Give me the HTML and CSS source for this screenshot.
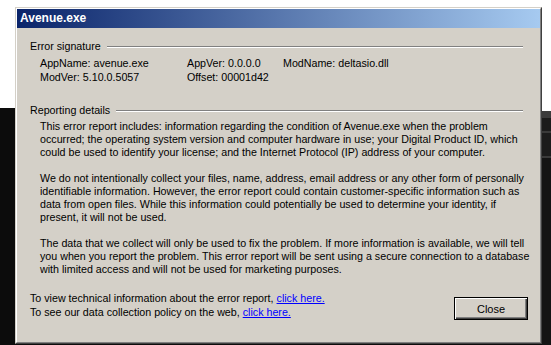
FILE: index.html
```html
<!DOCTYPE html>
<html lang="en">
<head>
    <meta charset="UTF-8">
    <title>Avenue.exe</title>
    <link rel="stylesheet" href="styles.css">
</head>
<body>
    <div class="dialog">
        <div class="frame">
            <div class="titlebar">Avenue.exe</div>
            <div class="content">
                <div class="group-head"><span>Error signature</span><div class="rule"></div></div>
                <div class="signature">
                    <span>AppName: avenue.exe</span>
                    <span>AppVer: 0.0.0.0</span>
                    <span>ModName: deltasio.dll</span>
                    <span>ModVer: 5.10.0.5057</span>
                    <span>Offset: 00001d42</span>
                    <span></span>
                </div>

                <div class="group-head reporting"><span>Reporting details</span><div class="rule"></div></div>
                <div class="details">
                    <p>This error report includes: information regarding the condition of Avenue.exe when the problem<br>
                    occurred; the operating system version and computer hardware in use; your Digital Product ID, which<br>
                    could be used to identify your license; and the Internet Protocol (IP) address of your computer.</p>
                    <p>We do not intentionally collect your files, name, address, email address or any other form of personally<br>
                    identifiable information. However, the error report could contain customer-specific information such as<br>
                    data from open files. While this information could potentially be used to determine your identity, if<br>
                    present, it will not be used.</p>
                    <p>The data that we collect will only be used to fix the problem. If more information is available, we will tell<br>
                    you when you report the problem. This error report will be sent using a secure connection to a database<br>
                    with limited access and will not be used for marketing purposes.</p>
                </div>

                <div class="footer">
                    <div class="links">
                        <div>To view technical information about the error report, <a href="#">click here.</a></div>
                        <div>To see our data collection policy on the web, <a href="#">click here.</a></div>
                    </div>
                    <button class="btn">Close</button>
                </div>
            </div>
        </div>
    </div>
</body>
</html>
```

FILE: styles.css
```css
html, body {
    margin: 0;
    padding: 0;
}
body {
    width: 551px;
    height: 345px;
    overflow: hidden;
    background-color: #0c0c0c;
    background-image:
        linear-gradient(to bottom, #ffffff 0, #ffffff 111px, #3c3c3c 111px, #3c3c3c 118px, #1c1c1c 118px, #1c1c1c 131px, #3a3a3a 131px, #3a3a3a 133px, #1c1c1c 133px, #1c1c1c 156px, #3a3a3a 156px, #3a3a3a 158px, #141414 158px),
        linear-gradient(to bottom, #ffffff 0, #ffffff 108px, #0c0c0c 108px);
    background-size: 9px 100%, 100% 100%;
    background-position: right top, left top;
    background-repeat: no-repeat;
    font-family: "Liberation Sans", Arial, sans-serif;
    font-size: 10.7px;
    color: #000;
}
.dialog {
    box-sizing: border-box;
    margin: 7px 0 0 15px;
    width: 527px;
    height: 337px;
    border: 1px solid;
    border-color: #d4d0c8 #404040 #404040 #d4d0c8;
    background: #d4d0c8;
}
.frame {
    box-sizing: border-box;
    height: 100%;
    border: 1px solid;
    border-color: #ffffff #808080 #808080 #ffffff;
    display: flex;
    flex-direction: column;
}
.titlebar {
    height: 19px;
    line-height: 19px;
    padding-left: 3px;
    background: linear-gradient(to right, #0a246a, #a6caf0);
    color: #fff;
    font-weight: bold;
    font-size: 12px;
}
.content {
    flex: 1;
    padding: 12px 12px 12px 13px;
    display: flex;
    flex-direction: column;
}
.group-head {
    display: flex;
    align-items: center;
    line-height: 13px;
    margin-right: 5px;
}
.group-head span {
    padding-right: 6px;
}
.rule {
    flex: 1;
    border-top: 1px solid #808080;
    border-bottom: 1px solid #ffffff;
}
.signature {
    display: grid;
    grid-template-columns: 147px 96px 1fr;
    line-height: 14px;
    margin: 3px 0 0 10px;
}
.reporting {
    margin-top: 20px;
}
.details {
    margin: 3px 0 0 10px;
    line-height: 13px;
    white-space: nowrap;
}
.details p {
    margin: 0 0 13px;
}
.details p:last-child {
    margin-bottom: 0;
}
.footer {
    margin-top: 15px;
    display: flex;
    justify-content: space-between;
    align-items: flex-start;
}
.links {
    line-height: 14px;
    white-space: nowrap;
}
.links a {
    color: #0000ff;
    text-decoration: underline;
}
.btn {
    margin-top: 6px;
    width: 74px;
    height: 23px;
    padding: 0;
    font-family: "Liberation Sans", Arial, sans-serif;
    font-size: 11px;
    color: #000;
    background: #d4d0c8;
    border: 1px solid #000;
    box-shadow: inset 1px 1px #ffffff, inset -1px -1px #404040, inset -2px -2px #808080;
}
```
